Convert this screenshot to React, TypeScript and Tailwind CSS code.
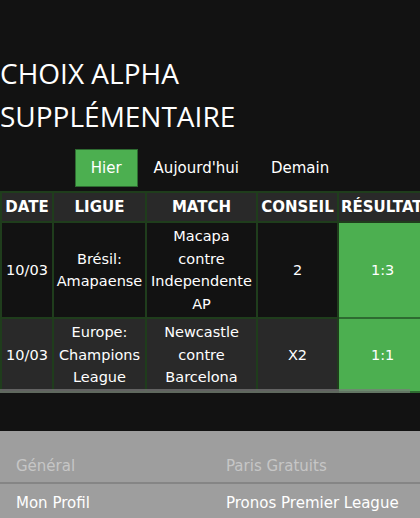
import React from "react";

const rows = [
  { date: "10/03", ligue: ["Brésil:", "Amapaense"], match: ["Macapa", "contre", "Independente", "AP"], conseil: "2", res: "1:3", bg: "bg-[#121212]", h: "h-[96px]" },
  { date: "10/03", ligue: ["Europe:", "Champions", "League"], match: ["Newcastle", "contre", "Barcelona"], conseil: "X2", res: "1:1", bg: "bg-[#292929]", h: "h-[74px]" },
];

export default function App() {
  return (
    <div className="w-[420px] h-[518px] overflow-hidden bg-[#121212] text-white" style={{ fontFamily: '"DejaVu Sans", Verdana, sans-serif' }}>
      <div className="h-[52px]" />
      <h1 className="text-[28px] leading-[43px] font-normal" style={{ fontFamily: '"Open Sans", "Noto Sans", sans-serif' }}>
        CHOIX ALPHA
        <br />
        SUPPLÉMENTAIRE
      </h1>
      <div className="mt-[11px] flex justify-center text-[15px]">
        <div className="h-[38px] px-[15px] flex items-center bg-[#4caf50] border border-[#2e6b31]">Hier</div>
        <div className="h-[38px] px-4 flex items-center">Aujourd'hui</div>
        <div className="h-[38px] px-4 flex items-center">Demain</div>
      </div>
      <div className="relative mt-[4px] overflow-hidden">
        <table className="border-collapse text-[14.5px] leading-[22.5px] text-center w-[440px] table-fixed">
          <colgroup>
            <col className="w-[52px]" />
            <col className="w-[93px]" />
            <col className="w-[111px]" />
            <col className="w-[81px]" />
            <col className="w-[103px]" />
          </colgroup>
          <thead>
            <tr className="bg-[#292929] h-[30px] text-[15px]">
              <th className="border-2 border-[#1f3d1c] font-bold px-0 whitespace-nowrap">DATE</th>
              <th className="border-2 border-[#1f3d1c] font-bold px-0 whitespace-nowrap">LIGUE</th>
              <th className="border-2 border-[#1f3d1c] font-bold px-0 whitespace-nowrap">MATCH</th>
              <th className="border-2 border-[#1f3d1c] font-bold px-0 whitespace-nowrap">CONSEIL</th>
              <th className="border-2 border-[#1f3d1c] font-bold pl-[2px] text-left whitespace-nowrap">RÉSULTAT</th>
            </tr>
          </thead>
          <tbody>
            {rows.map((r, i) => (
              <tr key={i} className={`${r.bg} ${r.h}`}>
                <td className="border-2 border-[#1f3d1c] px-0">{r.date}</td>
                <td className="border-2 border-[#1f3d1c] px-0">
                  {r.ligue.map((l) => (
                    <div key={l}>{l}</div>
                  ))}
                </td>
                <td className="border-2 border-[#1f3d1c] px-0">
                  {r.match.map((l) => (
                    <div key={l}>{l}</div>
                  ))}
                </td>
                <td className="border-2 border-[#1f3d1c]">{r.conseil}</td>
                <td className="border-2 border-[#2e6b31] bg-[#4caf50] text-left pl-[32px]">{r.res}</td>
              </tr>
            ))}
          </tbody>
        </table>
        <div className="absolute left-0 bottom-[0px] w-[410px] h-[4px] bg-[#7a7a7a]/70" />
      </div>
      <div className="h-[38px]" />
      <div className="bg-[#9e9e9e] h-[100px] text-[15px]">
        <div className="h-[22px]" />
        <div className="flex h-[26px] items-center text-[#c6c6c6]">
          <div className="w-[226px] pl-4">Général</div>
          <div>Paris Gratuits</div>
        </div>
        <div className="mt-[3px] h-[2px] bg-[#858585]" />
        <div className="flex h-[38px] items-center text-white">
          <div className="w-[226px] pl-4">Mon Profil</div>
          <div>Pronos Premier League</div>
        </div>
      </div>
    </div>
  );
}
